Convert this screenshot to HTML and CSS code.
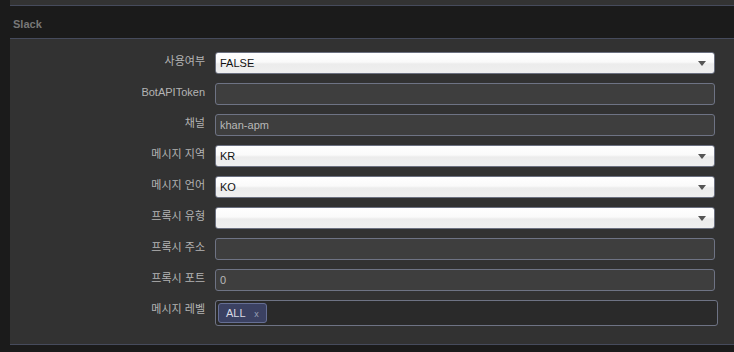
FILE: index.html
```html
<!DOCTYPE html>
<html lang="ko">
<head>
    <meta charset="UTF-8">
    <meta name="viewport" content="width=device-width, initial-scale=1.0">
    <title>Slack</title>
    <link rel="stylesheet" href="styles.css">
</head>
<body>

<div class="page">
  <div class="panel-top"></div>

  <div class="section-head">Slack</div>

  <div class="section-body">
    <div class="form-row">
      <label class="form-label">사용여부</label>
      <div class="select-box"><span>FALSE</span><span class="caret"></span></div>
    </div>
    <div class="form-row">
      <label class="form-label">BotAPIToken</label>
      <div class="text-box"></div>
    </div>
    <div class="form-row">
      <label class="form-label">채널</label>
      <div class="text-box">khan-apm</div>
    </div>
    <div class="form-row">
      <label class="form-label">메시지 지역</label>
      <div class="select-box"><span>KR</span><span class="caret"></span></div>
    </div>
    <div class="form-row">
      <label class="form-label">메시지 언어</label>
      <div class="select-box"><span>KO</span><span class="caret"></span></div>
    </div>
    <div class="form-row">
      <label class="form-label">프록시 유형</label>
      <div class="select-box"><span></span><span class="caret"></span></div>
    </div>
    <div class="form-row">
      <label class="form-label">프록시 주소</label>
      <div class="text-box"></div>
    </div>
    <div class="form-row">
      <label class="form-label">프록시 포트</label>
      <div class="text-box">0</div>
    </div>
    <div class="form-row">
      <label class="form-label">메시지 레벨</label>
      <div class="multi-box">
        <span class="tag">ALL <span class="tag-x">x</span></span>
      </div>
    </div>
  </div>
</div>

</body>
</html>
```

FILE: styles.css
```css
body {
  margin: 0;
  background: #1b1b1b;
  font-family: "Liberation Sans", "Noto Sans CJK KR", Arial, sans-serif;
  font-size: 11px;
}

div.page {
  padding-left: 10px;
}

div.panel-top {
  height: 5px;
  background: #333333;
  border-bottom: 1px solid #464b5c;
}

div.section-head {
  height: 27px;
  line-height: 27px;
  padding: 5px 0 0 3px;
  background: #1b1b1b;
  color: #777777;
  font-weight: bold;
  border-bottom: 1px solid #464b5c;
}

div.section-body {
  background: #323232;
  padding: 13px 19px 18px 0;
  border-bottom: 1px solid #464b5c;
  display: flex;
  flex-direction: column;
  gap: 9px;
}

div.form-row {
  display: grid;
  grid-template-columns: 195px 1fr;
  column-gap: 10px;
  align-items: start;
}

label.form-label {
  text-align: right;
  line-height: 18px;
  color: #b4b4b4;
}

div.select-box {
  height: 20px;
  border: 1px solid #6b7080;
  border-radius: 3px;
  background: linear-gradient(180deg, #ffffff 0%, #fafafa 45%, #ececec 55%, #efefef 100%);
  color: #111111;
  line-height: 20px;
  padding: 0 8px 0 4px;
  display: flex;
  justify-content: space-between;
  align-items: center;
}

span.caret {
  width: 0;
  height: 0;
  border-left: 4px solid transparent;
  border-right: 4px solid transparent;
  border-top: 5px solid #555555;
  margin-top: 1px;
}

div.text-box {
  height: 20px;
  border: 1px solid #6e7384;
  border-radius: 3px;
  background: #3e3e3e;
  color: #b8b8b8;
  line-height: 21px;
  padding: 0 4px;
}

div.multi-box {
  height: 26px;
  box-sizing: border-box;
  margin-right: -3px;
  border: 1px solid #6e7384;
  border-radius: 3px;
  background: #2a2a2a;
  padding: 2px 0 0 2px;
}

span.tag {
  display: inline-block;
  height: 18px;
  line-height: 18px;
  padding: 0 7px;
  border: 1px solid #666f94;
  border-radius: 3px;
  background: #3b4162;
  color: #d8dae4;
}

span.tag-x {
  margin-left: 6px;
  font-size: 9px;
  color: #9aa0b8;
}
```
